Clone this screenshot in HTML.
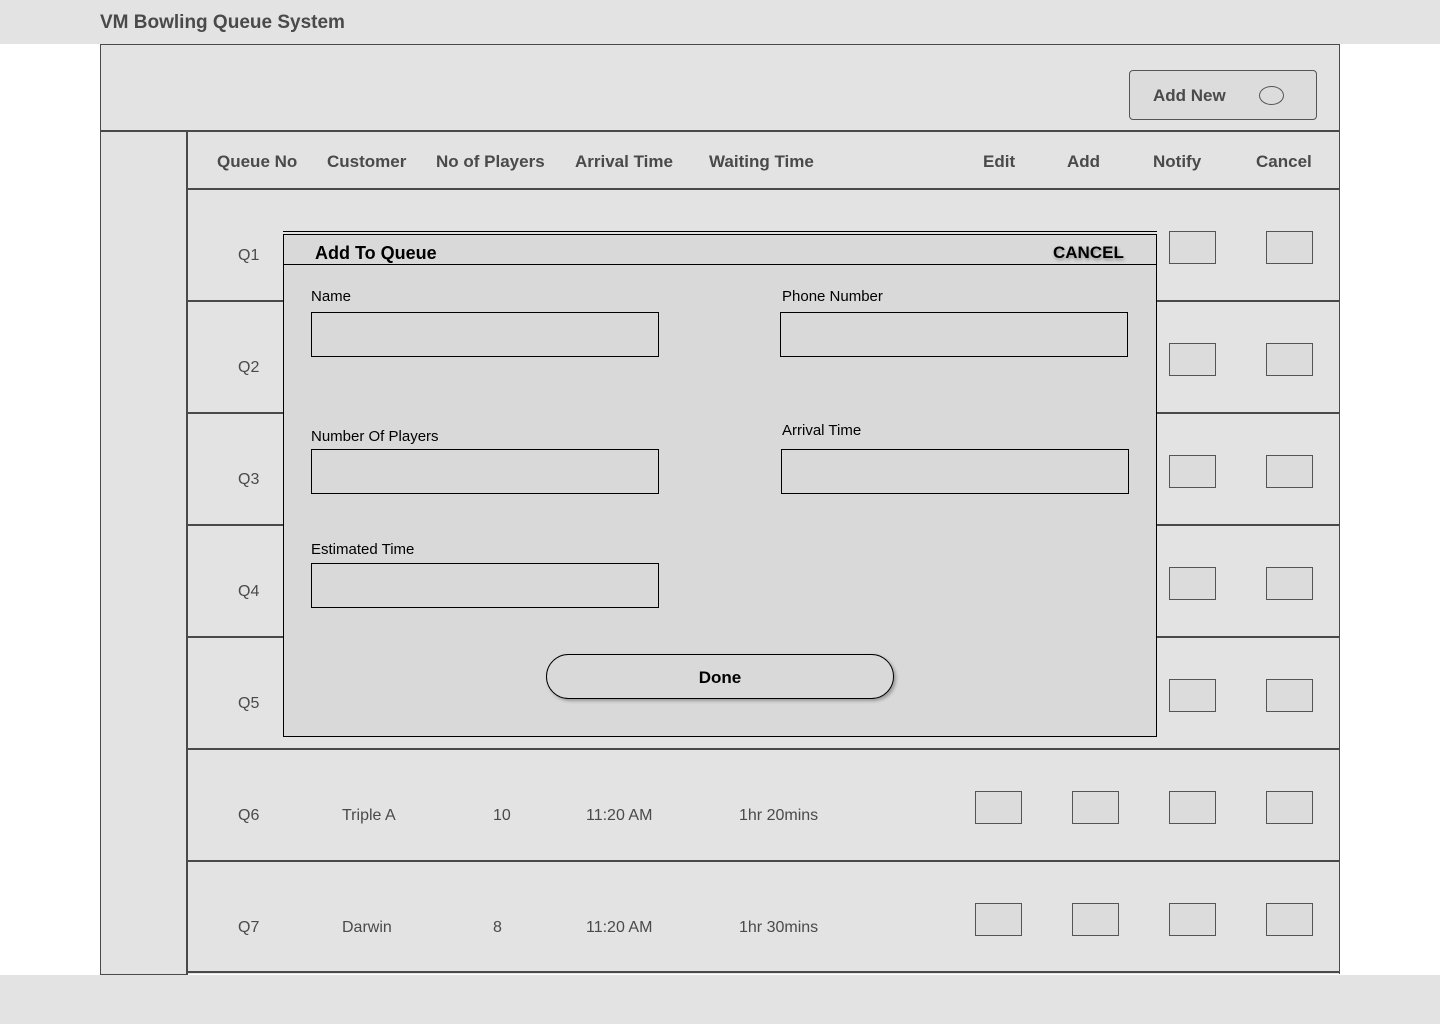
<!DOCTYPE html>
<html><head><meta charset="utf-8"><style>
*{box-sizing:border-box;margin:0;padding:0}
body{width:1440px;height:1024px;position:relative;background:#fff;font-family:"Liberation Sans",Arial,sans-serif;overflow:hidden}
.a{position:absolute}
.t{position:absolute;color:#4a4a4a;font-size:16px;white-space:nowrap;line-height:18px}
.h{position:absolute;color:#4a4a4a;font-size:17px;font-weight:bold;white-space:nowrap;line-height:20px}
.bx{position:absolute;width:47px;height:33px;background:#dcdcdc;border:1px solid #555}
.row{position:absolute;left:186px;width:1154px;height:112px;border-bottom:2px solid #4a4a4a}
.lbl{position:absolute;font-size:15px;color:#000;white-space:nowrap;line-height:18px}
.in{position:absolute;width:348px;height:45px;border:1px solid #000;background:#d9d9d9}
</style></head><body>
<div class="a" style="left:0;top:0;width:1440px;height:44px;background:#e3e3e3"></div>
<div class="a" style="left:100px;top:11px;font-size:19px;font-weight:bold;color:#4a4a4a;line-height:24px">VM Bowling Queue System</div>
<div class="a" style="left:0;top:975px;width:1440px;height:49px;background:#e3e3e3"></div>

<div class="a" style="left:100px;top:44px;width:1240px;height:930px;background:#e3e3e3;border:1px solid #4a4a4a;border-bottom:none"></div>
<div class="a" style="left:100px;top:130px;width:1240px;height:2px;background:#4a4a4a"></div>
<div class="a" style="left:100px;top:130px;width:88px;height:845px;border:1px solid #4a4a4a;border-right:2px solid #4a4a4a;border-top:none"></div>
<div class="a" style="left:186px;top:188px;width:1154px;height:2px;background:#4a4a4a"></div>
<div class="a" style="left:186px;top:971px;width:1154px;height:2px;background:#4a4a4a"></div>

<div class="a" style="left:1129px;top:70px;width:188px;height:50px;border:1px solid #555;border-radius:4px;background:#dcdcdc"></div>
<div class="h" style="left:1153px;top:86px">Add New</div>
<div class="a" style="left:1259px;top:86px;width:25px;height:19px;border:1px solid #555;border-radius:50%"></div>

<div class="h" style="left:217px;top:152px">Queue No</div>
<div class="h" style="left:327px;top:152px">Customer</div>
<div class="h" style="left:436px;top:152px">No of Players</div>
<div class="h" style="left:575px;top:152px">Arrival Time</div>
<div class="h" style="left:709px;top:152px">Waiting Time</div>
<div class="h" style="left:983px;top:152px">Edit</div>
<div class="h" style="left:1067px;top:152px">Add</div>
<div class="h" style="left:1153px;top:152px">Notify</div>
<div class="h" style="left:1256px;top:152px">Cancel</div>

<div class="row" style="top:190px;height:112px"></div>
<div class="row" style="top:302px"></div>
<div class="row" style="top:414px"></div>
<div class="row" style="top:526px"></div>
<div class="row" style="top:638px"></div>
<div class="row" style="top:750px"></div>

<div class="t" style="left:238px;top:247px">Q1</div>
<div class="t" style="left:238px;top:359px">Q2</div>
<div class="t" style="left:238px;top:471px">Q3</div>
<div class="t" style="left:238px;top:583px">Q4</div>
<div class="t" style="left:238px;top:695px">Q5</div>
<div class="t" style="left:238px;top:807px">Q6</div>
<div class="t" style="left:342px;top:807px">Triple A</div>
<div class="t" style="left:493px;top:807px">10</div>
<div class="t" style="left:586px;top:807px">11:20 AM</div>
<div class="t" style="left:739px;top:807px">1hr 20mins</div>
<div class="t" style="left:238px;top:919px">Q7</div>
<div class="t" style="left:342px;top:919px">Darwin</div>
<div class="t" style="left:493px;top:919px">8</div>
<div class="t" style="left:586px;top:919px">11:20 AM</div>
<div class="t" style="left:739px;top:919px">1hr 30mins</div>

<div class="bx" style="left:1169px;top:231px"></div><div class="bx" style="left:1266px;top:231px"></div>
<div class="bx" style="left:1169px;top:343px"></div><div class="bx" style="left:1266px;top:343px"></div>
<div class="bx" style="left:1169px;top:455px"></div><div class="bx" style="left:1266px;top:455px"></div>
<div class="bx" style="left:1169px;top:567px"></div><div class="bx" style="left:1266px;top:567px"></div>
<div class="bx" style="left:1169px;top:679px"></div><div class="bx" style="left:1266px;top:679px"></div>
<div class="bx" style="left:975px;top:791px"></div><div class="bx" style="left:1072px;top:791px"></div><div class="bx" style="left:1169px;top:791px"></div><div class="bx" style="left:1266px;top:791px"></div>
<div class="bx" style="left:975px;top:903px"></div><div class="bx" style="left:1072px;top:903px"></div><div class="bx" style="left:1169px;top:903px"></div><div class="bx" style="left:1266px;top:903px"></div>

<!-- dialog -->
<div class="a" style="left:283px;top:231px;width:874px;height:506px;background:#d9d9d9;border:1px solid #000"></div>
<div class="a" style="left:283px;top:231px;width:874px;height:4px;background:#e3e3e3;border-top:1px solid #000;border-bottom:1px solid #000"></div>
<div class="a" style="left:283px;top:264px;width:874px;height:1px;background:#000"></div>
<div class="a" style="left:315px;top:242px;font-size:18px;font-weight:bold;color:#000;line-height:22px">Add To Queue</div>
<div class="a" style="left:1053px;top:242px;font-size:17px;font-weight:bold;color:#000;line-height:22px;text-shadow:1px 2px 3px rgba(0,0,0,.35)">CANCEL</div>

<div class="lbl" style="left:311px;top:288px">Name</div>
<div class="in" style="left:311px;top:312px"></div>
<div class="lbl" style="left:782px;top:288px">Phone Number</div>
<div class="in" style="left:780px;top:312px"></div>
<div class="lbl" style="left:311px;top:428px">Number Of Players</div>
<div class="in" style="left:311px;top:449px"></div>
<div class="lbl" style="left:782px;top:422px">Arrival Time</div>
<div class="in" style="left:781px;top:449px"></div>
<div class="lbl" style="left:311px;top:541px">Estimated Time</div>
<div class="in" style="left:311px;top:563px"></div>

<div class="a" style="left:546px;top:654px;width:348px;height:45px;border:1px solid #000;border-radius:23px;background:#d9d9d9;box-shadow:2px 2px 3px rgba(0,0,0,.3);text-align:center;line-height:45px;font-size:17px;font-weight:bold;color:#000">Done</div>
</body></html>
